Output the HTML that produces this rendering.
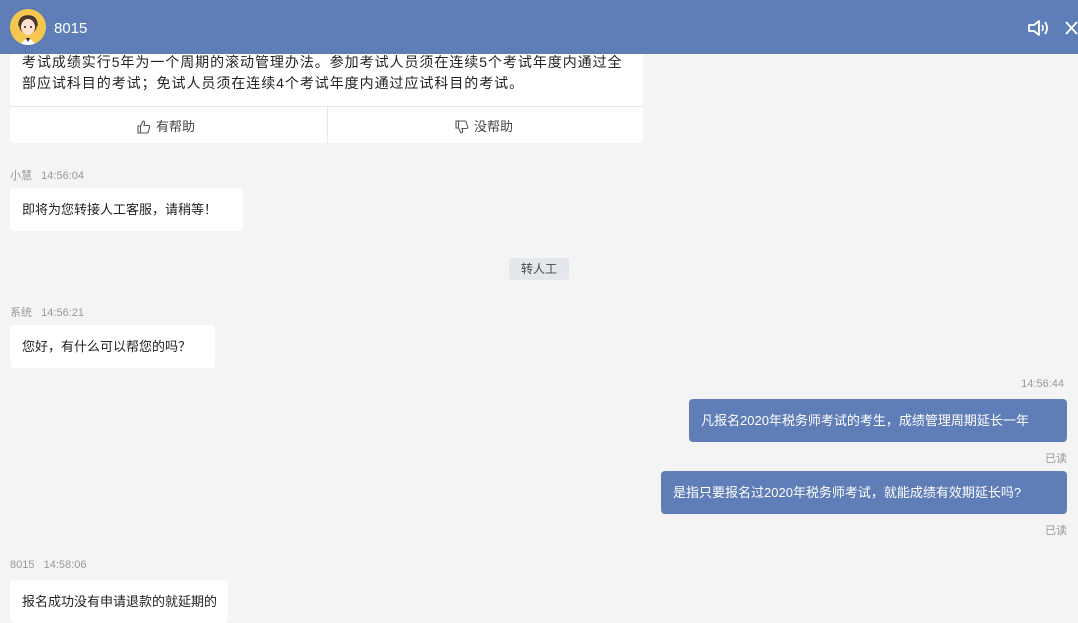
<!DOCTYPE html>
<html><head><meta charset="utf-8"><style>
*{margin:0;padding:0;box-sizing:border-box}
body{width:1078px;height:617px;overflow:hidden;background:#f4f4f4;font-family:"Liberation Sans","Noto Sans CJK SC",sans-serif;position:relative;color:#222}
.hdr{position:absolute;left:0;top:0;width:1078px;height:54px;background:#5f7db6;z-index:5}
.av{position:absolute;left:10px;top:9px;width:36px;height:36px;border-radius:50%;background:#f5c74f;overflow:hidden}
.hdr .name{position:absolute;left:54px;top:20px;color:#fff;font-size:15px}
.a{position:absolute}
.meta{font-size:11px;color:#999}
.bub{position:absolute;background:#fff;border-radius:4px;font-size:13px;padding:0 12px;line-height:43px;height:43px;white-space:nowrap}
.blue{background:#5f7db6;color:#fff}
.card{position:absolute;left:10px;top:30px;width:633px;height:113px;background:#fff;border-radius:4px}
.card .t{position:absolute;left:12px;top:22px;font-size:14px;line-height:21px;width:620px;white-space:nowrap;letter-spacing:0.95px}
.card .line{position:absolute;left:0;top:76px;width:633px;height:1px;background:#e8e8e8}
.card .vl{position:absolute;left:317px;top:77px;width:1px;height:36px;background:#e8e8e8}
.btn{position:absolute;top:79px;height:36px;line-height:36px;font-size:13px;color:#444;display:flex;align-items:center;gap:5px}
</style></head><body>
<div class="hdr">
 <div class="av"><svg width="36" height="36" viewBox="0 0 36 36"><circle cx="18" cy="16" r="9" fill="#5a3a2a"/><ellipse cx="18" cy="18" rx="7" ry="8" fill="#fde3cf"/><path d="M10 36 Q18 24 26 36Z" fill="#fff"/><path d="M16 29 L18 33 L20 29Z" fill="#222"/><circle cx="15" cy="18" r="1" fill="#222"/><circle cx="21" cy="18" r="1" fill="#222"/><path d="M9 17 Q9 7 18 7 Q27 7 27 17" stroke="#333" stroke-width="1.5" fill="none"/></svg></div>
 <div class="name">8015</div>
 <svg class="a" style="left:1027px;top:18px" width="24" height="20" viewBox="0 0 24 20"><path d="M2 7 H7 L12 3 V17 L7 13 H2Z" fill="none" stroke="#fff" stroke-width="1.8" stroke-linejoin="round"/><path d="M15 7 Q17 10 15 13" fill="none" stroke="#fff" stroke-width="1.8"/><path d="M18 4 Q22 10 18 16" fill="none" stroke="#fff" stroke-width="1.8"/></svg>
 <svg class="a" style="left:1065px;top:21px" width="13" height="14" viewBox="0 0 13 14"><path d="M1 1 L12 13 M12 1 L1 13" stroke="#fff" stroke-width="1.8"/></svg>
</div>
<div class="card">
 <div class="t">考试成绩实行5年为一个周期的滚动管理办法。参加考试人员须在连续5个考试年度内通过全<br>部应试科目的考试；免试人员须在连续4个考试年度内通过应试科目的考试。</div>
 <div class="line"></div><div class="vl"></div>
 <div class="btn" style="left:127px"><svg width="14" height="14" viewBox="0 0 14 14"><path d="M1 6 H3.5 V13 H1Z M3.5 6 L6 1 Q8 1 7.5 4 L7 5.5 H12 Q13 6 12.5 7.5 L11 12.5 Q10.5 13 10 13 H3.5" fill="none" stroke="#555" stroke-width="1.1"/></svg>有帮助</div>
 <div class="btn" style="left:445px"><svg width="14" height="14" viewBox="0 0 14 14" style="transform:scaleY(-1)"><path d="M1 6 H3.5 V13 H1Z M3.5 6 L6 1 Q8 1 7.5 4 L7 5.5 H12 Q13 6 12.5 7.5 L11 12.5 Q10.5 13 10 13 H3.5" fill="none" stroke="#555" stroke-width="1.1"/></svg>没帮助</div>
</div>
<div class="a meta" style="left:10px;top:167px">小慧&nbsp;&nbsp;&nbsp;14:56:04</div>
<div class="bub" style="left:10px;top:188px;width:233px">即将为您转接人工客服，请稍等！</div>
<div class="a" style="left:509px;top:258px;width:60px;height:22px;background:#e4e7ec;border-radius:3px;font-size:12px;color:#444;text-align:center;line-height:22px">转人工</div>
<div class="a meta" style="left:10px;top:304px">系统&nbsp;&nbsp;&nbsp;14:56:21</div>
<div class="bub" style="left:10px;top:325px;width:205px">您好，有什么可以帮您的吗？</div>
<div class="a meta" style="right:14px;top:378px">14:56:44</div>
<div class="bub blue" style="right:11px;top:399px;width:378px">凡报名2020年税务师考试的考生，成绩管理周期延长一年</div>
<div class="a meta" style="right:11px;top:450px">已读</div>
<div class="bub blue" style="right:11px;top:471px;width:406px">是指只要报名过2020年税务师考试，就能成绩有效期延长吗?</div>
<div class="a meta" style="right:11px;top:522px">已读</div>
<div class="a meta" style="left:10px;top:559px">8015&nbsp;&nbsp;&nbsp;14:58:06</div>
<div class="bub" style="left:10px;top:580px;width:218px">报名成功没有申请退款的就延期的</div>
</body></html>
